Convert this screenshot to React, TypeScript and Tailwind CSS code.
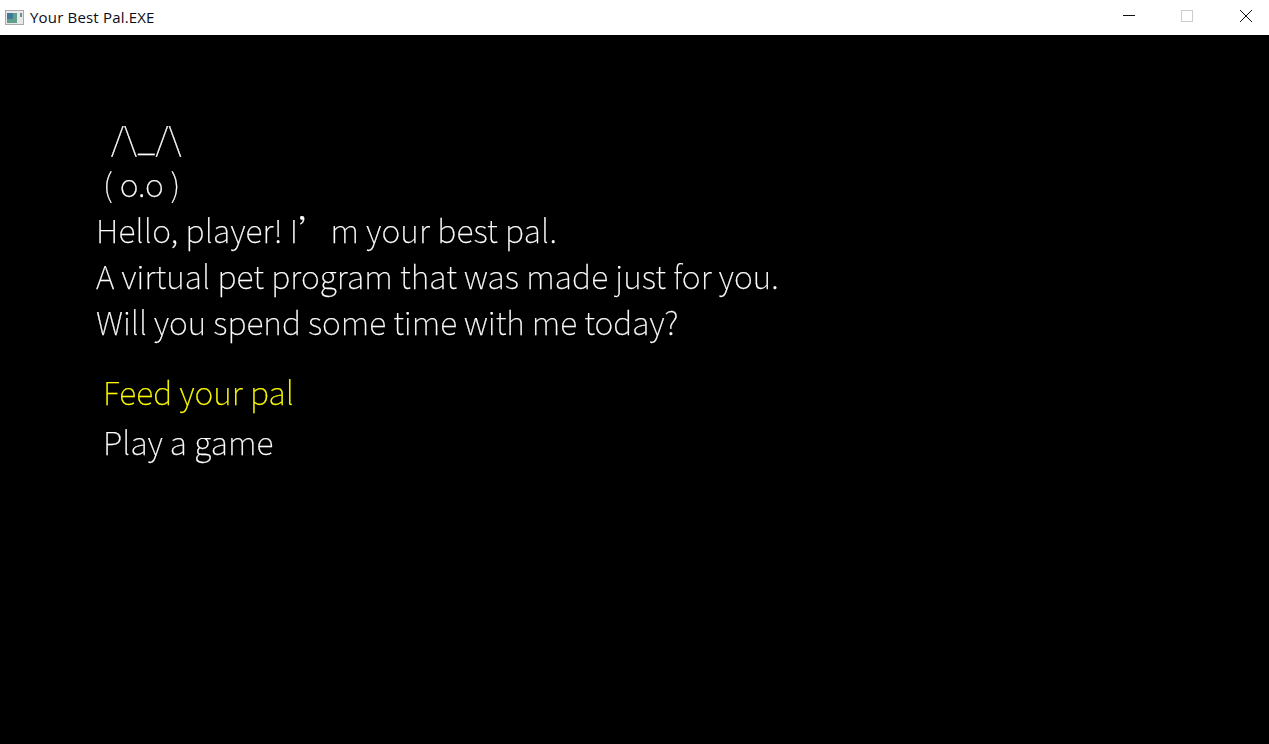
const cjk = "font-['Noto_Sans_CJK_SC',sans-serif] font-thin [-webkit-text-stroke:0.25px] [will-change:transform]";

function TitleBar() {
  return (
    <div className="flex h-[35px] items-center bg-white">
      <svg width="20" height="16" viewBox="0 0 20 16" className="ml-[5px]">
        <rect x="0.5" y="0.5" width="18" height="14" fill="#e8e8e8" stroke="#a9a9a9" />
        <rect x="2" y="3" width="10" height="10" fill="#5f9f8c" />
        <rect x="2" y="3" width="6" height="6" fill="#3f7a9a" />
        <rect x="15" y="3" width="2" height="4" fill="#6a8f8a" />
      </svg>
      <span className="ml-[5px] font-['Open_Sans',sans-serif] text-[15px] tracking-[0.18px] text-[#0b0b20]">Your Best Pal.EXE</span>
      <div className="ml-auto flex items-center">
        <svg width="58" height="35" viewBox="0 0 58 35">
          <path d="M28 15.5H40" stroke="#111" fill="none" />
        </svg>
        <svg width="58" height="35" viewBox="0 0 58 35">
          <rect x="28.5" y="10.5" width="11" height="11" stroke="#ccc" fill="none" />
        </svg>
        <svg width="58" height="35" viewBox="0 0 58 35">
          <path d="M29 10L41 22M41 10L29 22" stroke="#111" fill="none" />
        </svg>
      </div>
    </div>
  );
}

export default function App() {
  return (
    <div className="flex h-[744px] w-[1269px] flex-col overflow-hidden bg-black">
      <TitleBar />
      <main className={`flex flex-col pl-[96px] pt-[79px] text-[32px] leading-[46px] text-white ${cjk}`}>
        <p className="whitespace-pre tracking-[0.5px]">{"  /\\_/\\"}</p>
        <p className="whitespace-pre">{" ( o.o )"}</p>
        <p className="tracking-[0.18px]">Hello, player! I’m your best pal.</p>
        <p className="tracking-[0.1px]">A virtual pet program that was made just for you.</p>
        <p>Will you spend some time with me today?</p>
        <ul className="mt-[24px] flex flex-col gap-[4px] pl-[7px] tracking-[0.08px]">
          <li className="text-[#ffff00]">Feed your pal</li>
          <li>Play a game</li>
        </ul>
      </main>
    </div>
  );
}
